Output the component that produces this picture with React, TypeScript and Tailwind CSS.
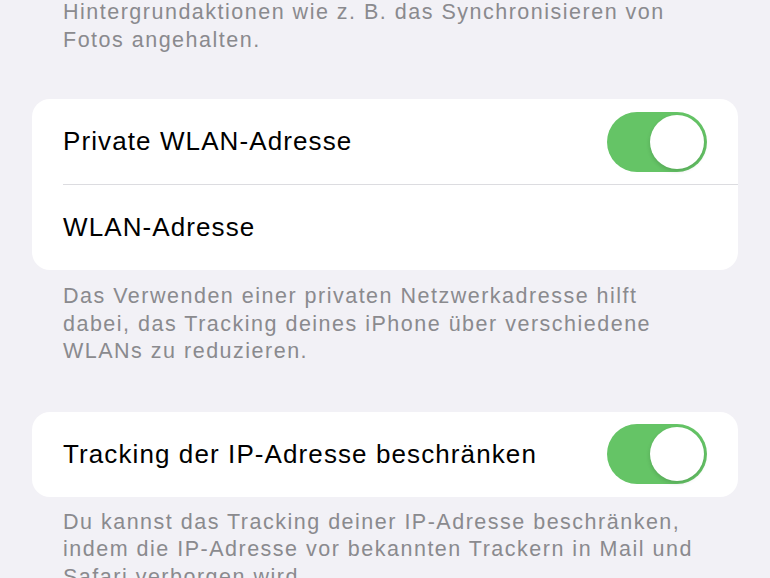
const Toggle = () => (
  <div className="w-[100px] h-[60px] rounded-full bg-[#65c466] p-[3px] flex justify-end shrink-0">
    <div className="w-[54px] h-[54px] rounded-full bg-white shadow-[0_2px_4px_rgba(0,0,0,0.15)]" />
  </div>
);

const Footer = ({ children, className = '' }: { children: React.ReactNode; className?: string }) => (
  <p className={`pl-[63px] pr-[20px] text-[21.5px] leading-[27.5px] tracking-[1.5px] text-[#8a8a8e] ${className}`}>
    {children}
  </p>
);

const App = () => {
  return (
    <main
      className="w-[770px] h-[578px] overflow-hidden bg-[#f2f1f6] flex flex-col"
      style={{ fontFamily: '"Liberation Sans", Arial, sans-serif' }}
    >
      <Footer className="mt-[-1px]">
        Hintergrundaktionen wie z.&nbsp;B. das Synchronisieren von<br />Fotos angehalten.
      </Footer>
      {/* wlan card */}
      <section className="mt-[45px] mx-[32px] bg-white rounded-[18px] flex flex-col">
        <div className="h-[85px] pl-[31px] pr-[31px] flex items-center justify-between">
          <span className="text-[26px] tracking-[1.1px] text-black">Private WLAN-Adresse</span>
          <Toggle />
        </div>
        <div className="ml-[31px] h-px bg-[#dcdce0]" />
        <div className="h-[85px] pl-[31px] flex items-center">
          <span className="text-[26px] tracking-[1.1px] text-black">WLAN-Adresse</span>
        </div>
      </section>
      <Footer className="mt-[13px]">
        Das Verwenden einer privaten Netzwerkadresse hilft<br />
        dabei, das Tracking deines iPhone über verschiedene<br />
        WLANs zu reduzieren.
      </Footer>
      {/* ip tracking card */}
      <section className="mt-[46px] mx-[32px] bg-white rounded-[18px]">
        <div className="h-[85px] pl-[31px] pr-[31px] flex items-center justify-between">
          <span className="text-[26px] tracking-[1.1px] text-black">Tracking der IP-Adresse beschränken</span>
          <Toggle />
        </div>
      </section>
      <Footer className="mt-[12px]">
        Du kannst das Tracking deiner IP-Adresse beschränken,<br />
        indem die IP-Adresse vor bekannten Trackern in Mail und<br />
        Safari verborgen wird.
      </Footer>
    </main>
  );
};

export default App;
